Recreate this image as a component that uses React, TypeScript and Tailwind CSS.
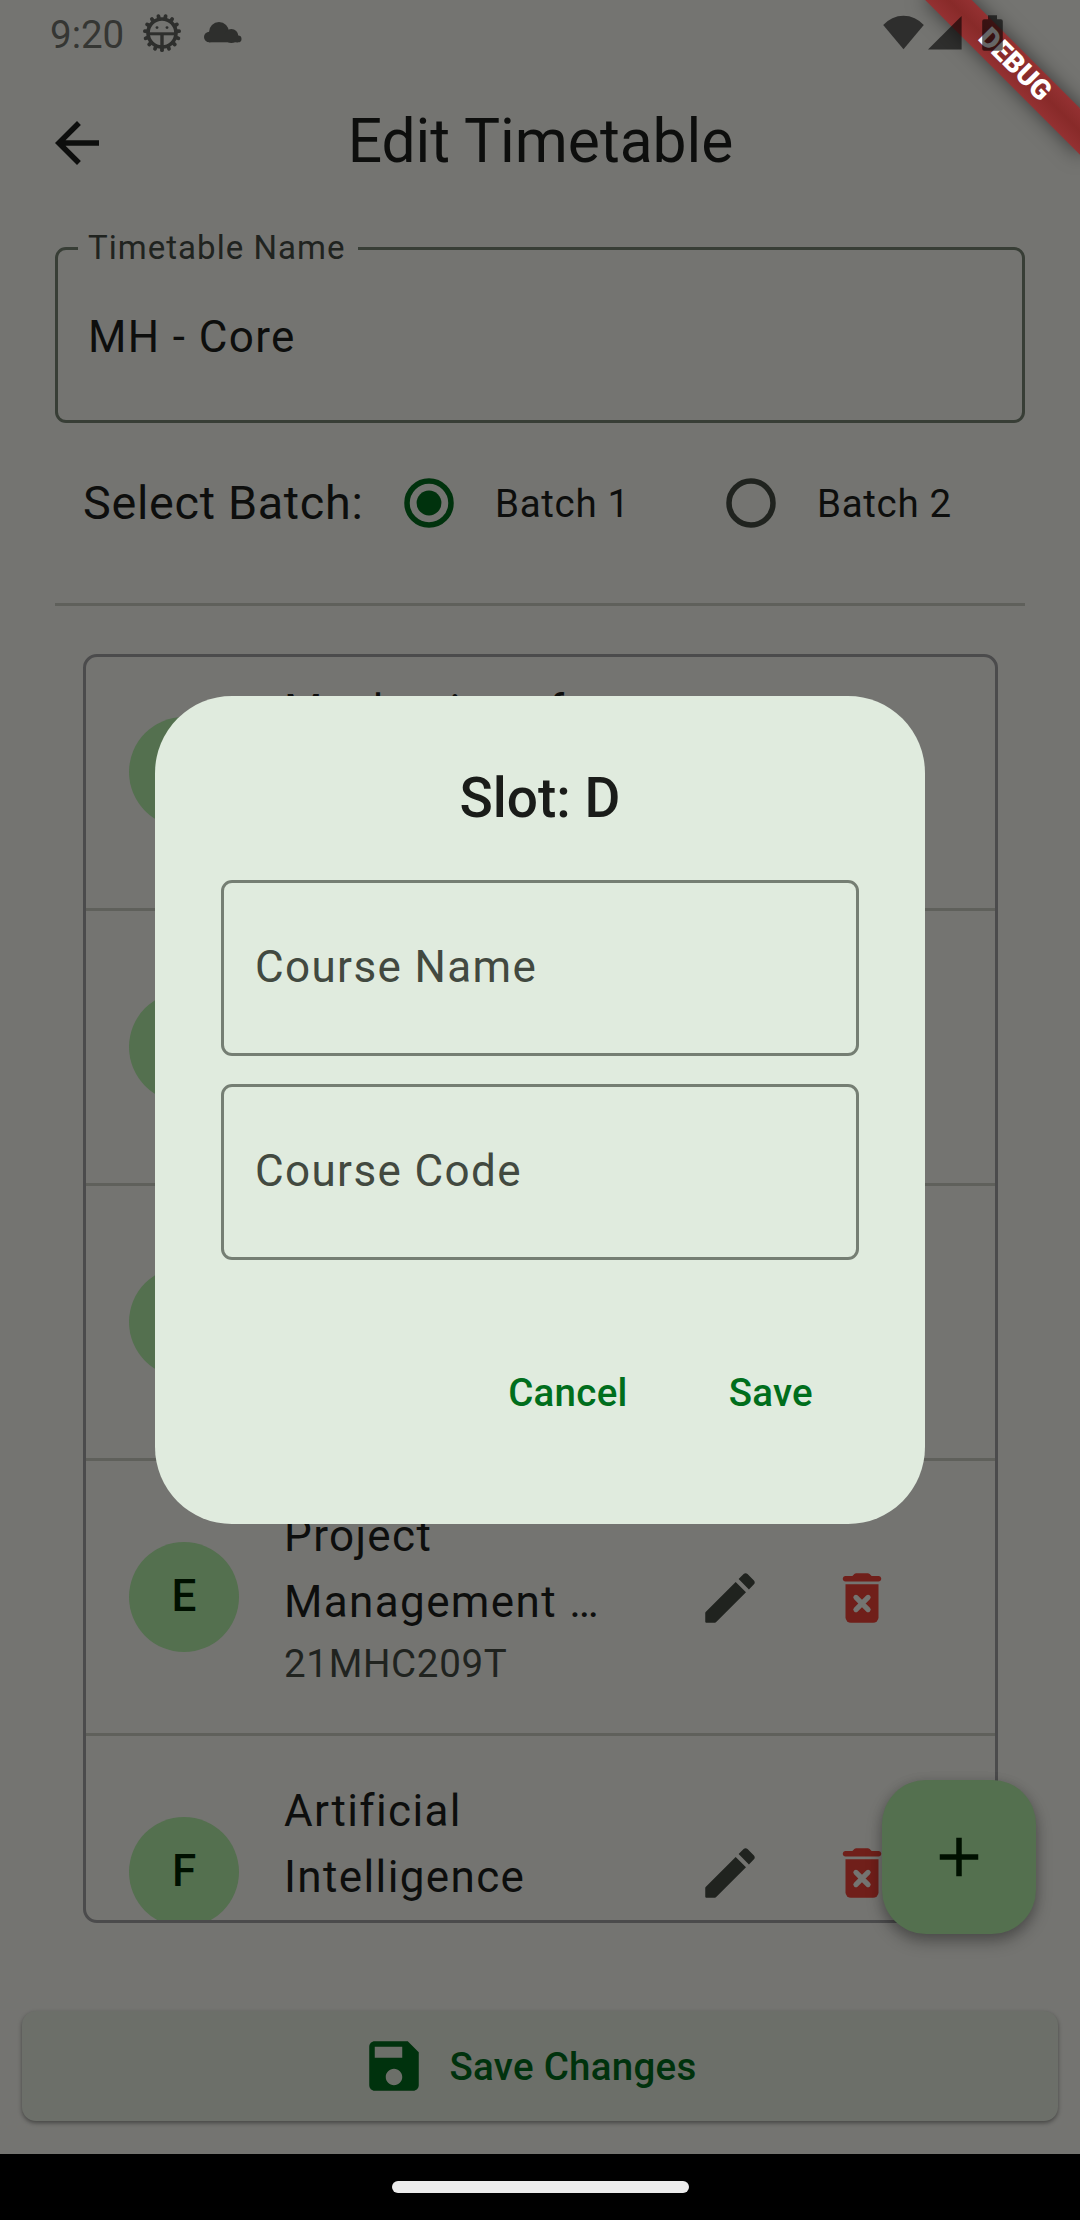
import React from "react";

type Slot = { letter: string; name: string; code: string };

const slots: Slot[] = [
  { letter: "B", name: "Mechanics of Solids", code: "21MHC201T" },
  { letter: "C", name: "", code: "" },
  { letter: "D", name: "", code: "" },
  { letter: "E", name: "Project Management …", code: "21MHC209T" },
  { letter: "F", name: "Artificial Intelligence", code: "21MHC210T" },
];

function BugIcon() {
  const teeth = Array.from({ length: 15 }, (_, i) => 12 + i * 24);
  return (
    <svg width="40" height="40" viewBox="-20 -20 40 40" fill="none" stroke="#2e2f2d">
      <circle r="14" strokeWidth="3.6" />
      {teeth.map((a) => (
        <line key={a} x1="0" y1="-14.5" x2="0" y2="-17.2" strokeWidth="3.8" strokeLinecap="round" transform={`rotate(${a})`} />
      ))}
      <path d="M-13 .8H13" strokeWidth="3" />
      <path d="M0 1V14" strokeWidth="3.4" />
      <circle cx="-5" cy="-5.4" r="1.4" fill="#2e2f2d" stroke="none" />
      <circle cx="5" cy="-5.4" r="1.4" fill="#2e2f2d" stroke="none" />
    </svg>
  );
}

function CloudIcon() {
  return (
    <svg width="38" height="21" viewBox="0 0 38 21" fill="#2e2f2d">
      <circle cx="5.3" cy="15" r="5.3" />
      <circle cx="15" cy="10" r="10" />
      <circle cx="27.3" cy="14" r="7" />
      <circle cx="34.1" cy="16.9" r="3.4" />
      <rect x="5" y="12" width="29" height="8.3" />
    </svg>
  );
}

function StatusBar() {
  return (
    <div className="relative z-30 flex h-[66px] items-start pl-[50px] text-[38.5px] leading-[66px] text-[#353633]">
      <span className="mt-[2px] w-[92px]">9:20</span>
      <div className="mt-[13px] w-[62px]">
        <BugIcon />
      </div>
      <div className="mt-[22px]">
        <CloudIcon />
      </div>
      <svg className="mt-[15px] ml-auto mr-[77px]" width="120" height="36" viewBox="0 0 120 36" fill="#000" fillOpacity="0.6">
        <path d="M20.5 34.3L.2 10A27 27 0 0 1 40.8 10Z" />
        <path d="M45 34.5H78.6V1Z" />
        <path d="M105 .3h9v4h3.8a2 2 0 0 1 2 2v27.5a2 2 0 0 1-2 2h-16.600a2 2 0 0 1-2-2V6.300a2 2 0 0 1 2-2h3.800z" />
      </svg>
    </div>
  );
}

function DebugBanner() {
  return (
    <div className="absolute top-[49px] left-[904px] z-20 flex h-[33px] w-[220px] rotate-45 items-center justify-center bg-linear-to-b from-[#943132] via-[#882a29] to-[#943132] pb-[3px] text-[28px] leading-[30px] font-black text-white shadow-[0_0_20px_rgba(0,0,0,0.5)]">
      DEBUG
    </div>
  );
}

function Radio({ selected }: { selected?: boolean }) {
  return (
    <div className="flex h-[132px] w-[132px] shrink-0 items-center justify-center">
      <svg width="50" height="50" viewBox="-25 -25 50 50">
        <circle r="22" fill="none" strokeWidth="5.5" stroke={selected ? "#00320d" : "#20231f"} />
        {selected && <circle r="12.4" fill="#00320d" />}
      </svg>
    </div>
  );
}

function PencilIcon() {
  return (
    <svg width="66" height="66" viewBox="0 0 24 24" fill="#20231f">
      <path d="M3 17.460v3.040c0 .28.22.5.5.5h3.040c.13 0 .26-.05.35-.15L17.810 9.940l-3.750-3.750L3.150 17.100c-.1.1-.15.22-.15.36zM20.710 7.040c.39-.39.39-1.020 0-1.410l-2.340-2.340c-.39-.39-1.020-.39-1.410 0l-1.830 1.830 3.750 3.750 1.830-1.830z" />
    </svg>
  );
}

function TrashIcon() {
  return (
    <svg width="66" height="66" viewBox="0 0 24 24" fill="#701f1a">
      <path d="M6 7H18V19a2 2 0 0 1-2 2H8a2 2 0 0 1-2-2Z" />
      <path d="M18 4h-2.500l-.71-.71c-.18-.18-.44-.29-.7-.29H9.910c-.26 0-.52.11-.7.29L8.500 4H6c-.55 0-1 .45-1 1s.45 1 1 1h12c.55 0 1-.45 1-1s-.45-1-1-1z" />
      <path d="M9.800 11.800l4.400 4.400M14.200 11.800l-4.400 4.400" stroke="#747471" strokeWidth="1.900" strokeLinecap="round" />
    </svg>
  );
}

function SlotRow({ slot }: { slot: Slot }) {
  return (
    <div className="flex h-[275px] shrink-0 items-center border-b-[3px] border-[#5f605b] pr-[67px] pl-[43px]">
      <div className="flex h-[110px] w-[110px] shrink-0 items-center justify-center rounded-full bg-[#54704f] pb-[3px] text-[44px] font-medium text-[#001000]">
        {slot.letter}
      </div>
      <div className="mr-[43px] ml-[45px] min-w-0 flex-1">
        <div className="-mt-[1px] mb-[1px] line-clamp-2 min-h-[132px] text-[44px] leading-[66px] tracking-[1.375px] text-[#0d0e0d]">{slot.name}</div>
        <div className="h-[55px] text-[38.5px] leading-[55px] tracking-[0.69px] text-[#20231f]">{slot.code}</div>
      </div>
      <div className="flex w-[132px] justify-center pt-[2px]">
        <PencilIcon />
      </div>
      <div className="flex w-[132px] justify-center pt-[2px]">
        <TrashIcon />
      </div>
    </div>
  );
}

function DialogField({ label }: { label: string }) {
  return (
    <div className="flex h-[176px] items-center rounded-[11px] border-[3px] border-[#757e73] pb-[2px] pl-[31px] text-[44px] tracking-[1.375px] text-[#424940]">
      {label}
    </div>
  );
}

function SlotDialog() {
  return (
    <div className="absolute inset-0 z-10 flex items-center justify-center">
      <div className="flex h-[828px] w-[770px] flex-col rounded-[77px] bg-[#e0ebde] px-[66px] pt-[58px]">
        <h2 className="h-[88px] text-center text-[55px] leading-[88px] font-medium text-[#1a1c19]">Slot: D</h2>
        <div className="mt-[38px] flex flex-col gap-[28px]">
          <DialogField label="Course Name" />
          <DialogField label="Course Code" />
        </div>
        <div className="mt-[67px] flex h-[132px] items-center justify-end gap-[101px] pr-[46px] text-[38.5px] font-medium tracking-[0.275px] text-[#006e1c]">
          <button>Cancel</button>
          <button>Save</button>
        </div>
      </div>
    </div>
  );
}

export default function App() {
  return (
    <div className="relative flex h-[2220px] w-[1080px] flex-col overflow-hidden bg-[#747471] font-[Roboto,sans-serif]">
      <StatusBar />
      <DebugBanner />

      <header className="flex h-[154px] items-center px-[44px]">
        <svg width="66" height="66" viewBox="0 0 24 24" fill="#0d0e0d">
          <path d="M20 11H7.830l5.590-5.590L12 4l-8 8 8 8 1.410-1.410L7.830 13H20v-2z" />
        </svg>
        <h1 className="flex-1 pr-[65px] pb-[1px] text-center text-[60.5px] text-[#0d0e0d]">Edit Timetable</h1>
      </header>

      <main className="flex flex-col px-[55px] pt-[27px]">
        <div className="relative flex h-[176px] items-center rounded-[11px] border-[3px] border-[#383e36] pt-[3px] pl-[30px] text-[44px] tracking-[1.375px] text-[#0d0e0d]">
          <span className="absolute -top-[22px] left-[20px] w-[280px] bg-[#747471] pl-[10px] text-[33px] leading-[40px] tracking-[1.03px] whitespace-nowrap text-[#20231f]">
            Timetable Name
          </span>
          MH - Core
        </div>

        <div className="mt-[14px] flex h-[132px] items-center pl-[28px] text-[38.5px] tracking-[0.69px] text-[#0d0e0d]">
          <span className="w-[280px] pt-[1px] text-[46.75px] whitespace-nowrap">Select Batch:</span>
          <Radio selected />
          <span className="w-[190px] pt-[2px]">Batch 1</span>
          <Radio />
          <span className="pt-[2px]">Batch 2</span>
        </div>

        <div className="mt-[34px] h-[3px] bg-[#5f605b]" />

        <section className="mt-[48px] mr-[27px] ml-[28px] h-[1269px] overflow-hidden rounded-[14px] border-[3px] border-[#4b4b4c]">
          <div className="-mt-[21px] flex flex-col">
            {slots.map((slot) => (
              <SlotRow key={slot.letter} slot={slot} />
            ))}
          </div>
        </section>
      </main>

      <button className="mx-[22px] mt-[88px] flex h-[110px] shrink-0 items-center justify-center gap-[22px] rounded-[14px] bg-[#6c6f69] pr-[22px] text-[38.5px] font-medium tracking-[0.275px] text-[#00320d] shadow-[0_2px_4px_rgba(0,0,0,0.4)]">
        <svg width="66" height="66" viewBox="0 0 24 24" fill="#00320d">
          <path d="M17 3H5c-1.110 0-2 .9-2 2v14c0 1.100.89 2 2 2h14c1.100 0 2-.9 2-2V7l-4-4zm-5 16c-1.660 0-3-1.340-3-3s1.340-3 3-3 3 1.340 3 3-1.340 3-3 3zm3-10H5V5h10v4z" />
        </svg>
        <span className="pt-[2px]">Save Changes</span>
      </button>

      <nav className="mt-auto flex h-[66px] shrink-0 items-center justify-center bg-black">
        <div className="h-[12px] w-[297px] rounded-full bg-[#ececec]" />
      </nav>

      <button className="absolute top-[1780px] left-[882px] flex h-[154px] w-[154px] items-center justify-center rounded-[44px] bg-[#54704f] shadow-[0_8px_16px_rgba(0,0,0,0.28),0_2px_12px_rgba(0,0,0,0.14)]">
        <svg width="66" height="66" viewBox="0 0 24 24" fill="#001000">
          <path d="M19 13h-6v6h-2v-6H5v-2h6V5h2v6h6v2z" />
        </svg>
      </button>

      <SlotDialog />
    </div>
  );
}
